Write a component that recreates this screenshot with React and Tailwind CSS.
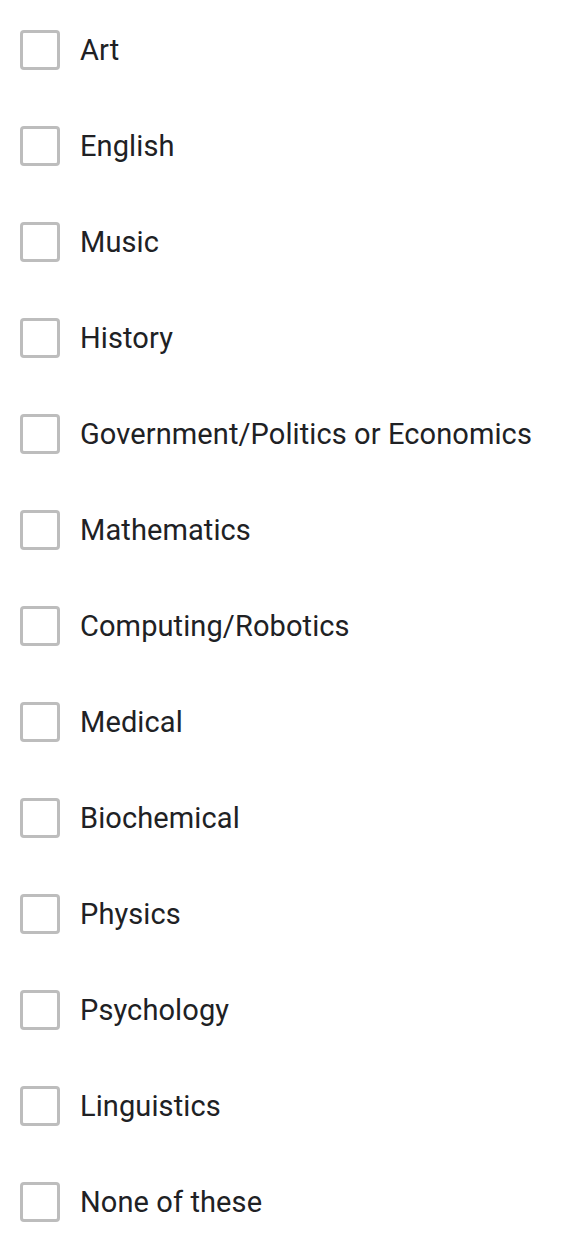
import React from 'react';

const subjects = [
  'Art',
  'English',
  'Music',
  'History',
  'Government/Politics or Economics',
  'Mathematics',
  'Computing/Robotics',
  'Medical',
  'Biochemical',
  'Physics',
  'Psychology',
  'Linguistics',
  'None of these',
];

export default function App() {
  return (
    <div className="w-[568px] h-[1258px] bg-white pt-[2px] font-['Roboto',sans-serif] text-[#202124] overflow-hidden">
      {subjects.map((s) => (
        <label key={s} className="flex items-center h-[96px] pl-[20px]">
          <span className="w-[40px] h-[40px] border-[3px] border-[#bdbdbd] rounded-[4px] shrink-0" />
          <span className="ml-[20px] text-[29px] leading-none tracking-[0.1px] whitespace-nowrap">{s}</span>
        </label>
      ))}
    </div>
  );
}
